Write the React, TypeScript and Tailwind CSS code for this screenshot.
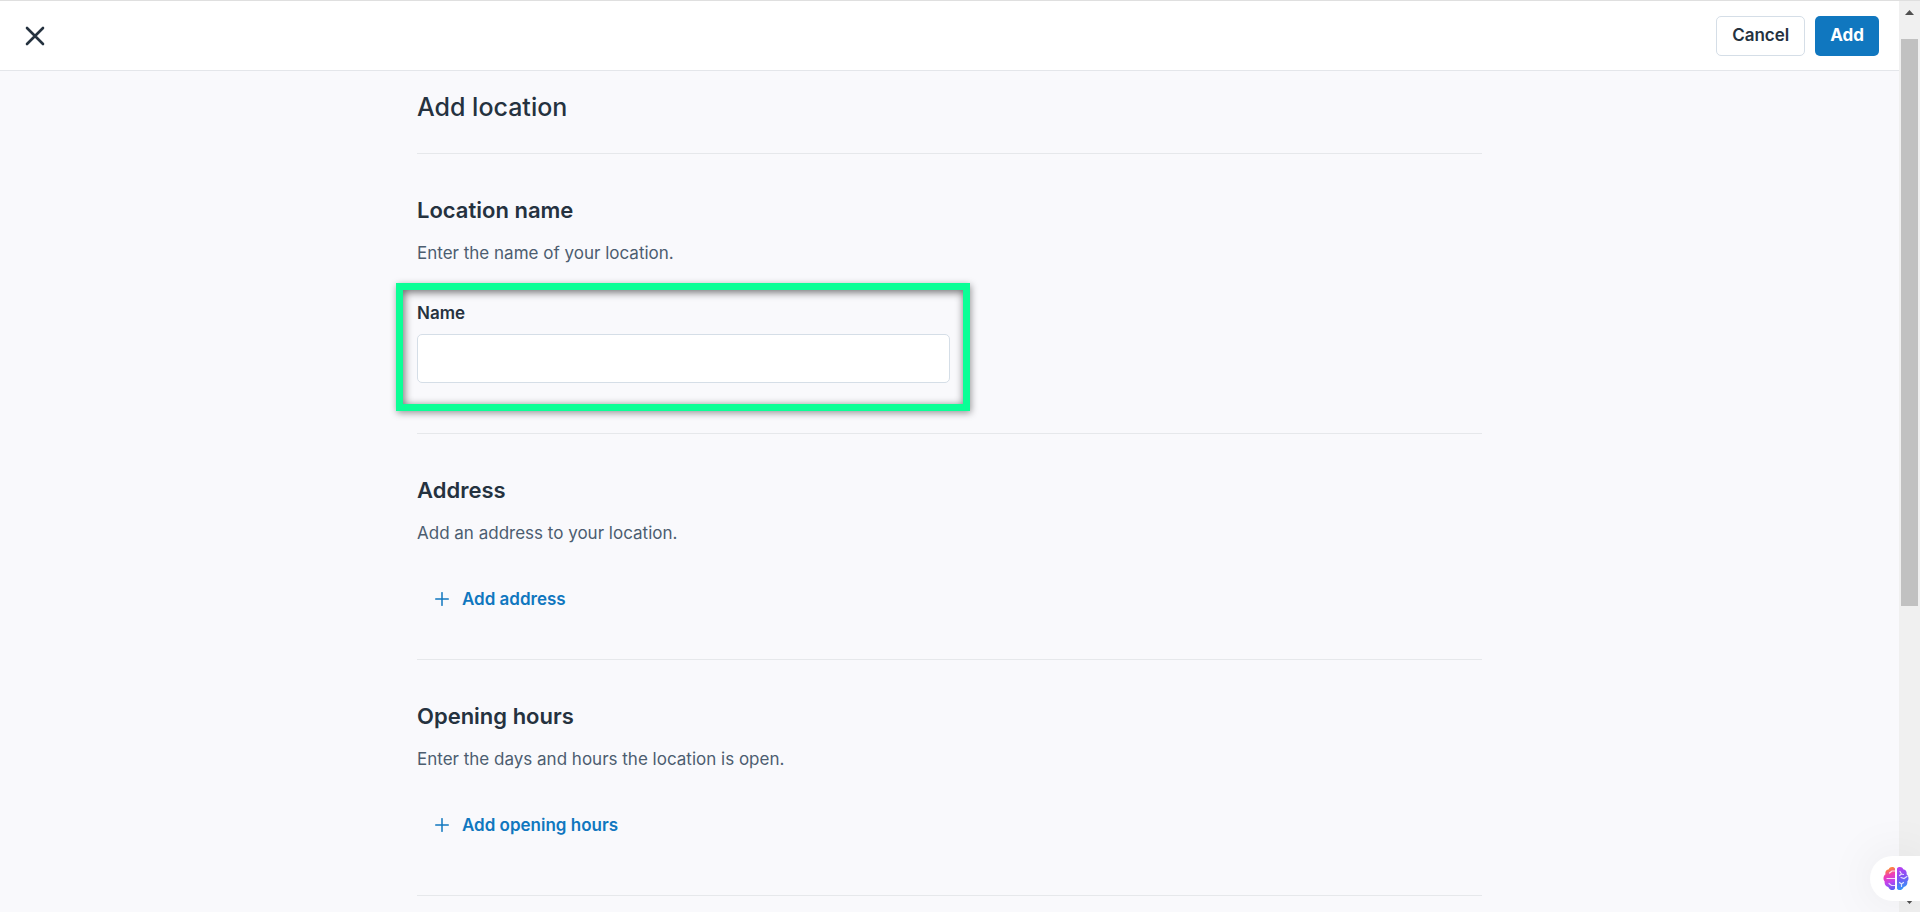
import React, { useState } from 'react';

interface SectionProps {
  title: string;
  description: string;
  className: string;
  children: React.ReactNode;
}

function Section({ title, description, className, children }: SectionProps) {
  return (
    <section className={`border-b border-[#e6e8eb] pt-[42px] ${className}`}>
      <h2 className="text-[22px] leading-7 font-semibold">{title}</h2>
      <p className="mt-[15px] text-[17px] leading-7 text-[#4c5d70]">{description}</p>
      {children}
    </section>
  );
}

function AddLink({ label }: { label: string }) {
  return (
    <button type="button" className="mt-7 flex h-12 items-center gap-[13px] px-[18px] text-[#1077bf]">
      <svg width="14" height="14" viewBox="0 0 14 14" fill="none" stroke="currentColor" strokeWidth="1.5" strokeLinecap="round">
        <path d="M7 .7v12.6M.7 7h12.6" />
      </svg>
      <span className="text-[17px] leading-6 font-semibold">{label}</span>
    </button>
  );
}

function BrainIcon() {
  return (
    <svg width="26" height="25" viewBox="0 0 26 25" fill="none">
      <defs>
        <linearGradient id="left" x1="3" y1="2" x2="11" y2="23" gradientUnits="userSpaceOnUse">
          <stop stopColor="#ff9a1e" />
          <stop offset=".35" stopColor="#f03cb4" />
          <stop offset=".65" stopColor="#c044ee" />
          <stop offset="1" stopColor="#5a5cf5" />
        </linearGradient>
        <linearGradient id="right" x1="15" y1="1" x2="22" y2="23" gradientUnits="userSpaceOnUse">
          <stop stopColor="#c03df0" />
          <stop offset=".5" stopColor="#7a55f5" />
          <stop offset="1" stopColor="#2f9af8" />
        </linearGradient>
      </defs>
      <path d="M12 2.5C10.5 .2 6.5 .6 5.8 3.2 3.2 3.4 1.8 6 2.5 8.2 .2 9.8 -.2 13.5 1.7 15.5 1.2 18.5 3 20.6 5.3 21 6.4 24.6 10.8 25 12 22.5Z" fill="url(#left)" />
      <path d="M14 2.5C15.5 .2 19.5 .6 20.2 3.2 22.8 3.4 24.2 6 23.5 8.2 25.8 9.8 26.2 13.5 24.3 15.5 24.8 18.5 23 20.6 20.7 21 19.6 24.6 15.2 25 14 22.5Z" fill="url(#right)" />
      <g stroke="#fff" strokeOpacity=".8" strokeWidth="1.2" strokeLinecap="round">
        <path d="M12 5H9L6.5 7M12 12.5H4M12 19.5H8.5L6 17.5" />
        <path d="M17 5.5 18.5 8 16.5 9.5M18.5 8 20.5 8.5M18 11.5 21 12.5 24 10.5M16.5 16.5 18.5 18V20.5M18.5 18 20.5 16.5" />
      </g>
    </svg>
  );
}

export default function App() {
  const [name, setName] = useState('');

  return (
    <div className="relative flex h-screen flex-col overflow-hidden border-t border-[#dfdfdf] bg-[#f9f9fc] font-['Inter','Liberation_Sans',sans-serif] text-[#25323f]">
      <div className="flex min-h-0 flex-1">
        <div className="flex min-w-0 flex-1 flex-col">
          <header className="flex h-[70px] shrink-0 items-center justify-between border-b border-[#e4e6ea] bg-white pr-5 pl-[25px]">
            <button type="button" aria-label="Close">
              <svg width="20" height="20" viewBox="0 0 20 20" fill="none" stroke="currentColor" strokeWidth="2.6" strokeLinecap="round">
                <path d="M2 2l16 16M18 2L2 18" />
              </svg>
            </button>
            <div className="flex gap-2.5">
              <button type="button" className="h-10 rounded-[5px] border border-[#d5dee7] bg-white px-[15px] pb-0.5 text-[17px] leading-6 font-semibold">
                Cancel
              </button>
              <button type="button" className="h-10 rounded-[5px] bg-[#1077bf] px-[15px] pb-0.5 text-[17px] leading-6 font-bold text-white">
                Add
              </button>
            </div>
          </header>

          <main className="mx-auto min-h-0 w-full max-w-[1065px] flex-1">
            <h1 className="border-b border-[#e6e8eb] pt-5 pb-[30px] text-[25px] leading-8 font-medium">Add location</h1>

            <Section title="Location name" description="Enter the name of your location." className="pb-[50px]">
              <div className="relative mt-[34px] w-1/2">
                <label htmlFor="location-name" className="block text-[17px] leading-6 font-semibold">
                  Name
                </label>
                <input
                  id="location-name"
                  type="text"
                  value={name}
                  onChange={(e) => setName(e.target.value)}
                  className="mt-[9px] block h-[49px] w-full rounded-[5px] border border-[#d5dee7] bg-white px-4 text-[17px] outline-none"
                />
                {/* Highlight frame around the field */}
                <div className="pointer-events-none absolute -top-[18px] -right-5 -bottom-7 -left-[21px] border-7 border-[#0aff96] shadow-[1px_2px_7px_rgba(0,0,0,0.4),inset_1px_2px_8px_rgba(0,0,0,0.6)]" />
              </div>
            </Section>

            <Section title="Address" description="Add an address to your location." className="pb-9">
              <AddLink label="Add address" />
            </Section>

            <Section title="Opening hours" description="Enter the days and hours the location is open." className="pb-[46px]">
              <AddLink label="Add opening hours" />
            </Section>
          </main>
        </div>

        {/* Scrollbar */}
        <div className="flex w-[21px] shrink-0 flex-col items-center bg-[#f0f0f0]">
          <svg className="my-[9px] shrink-0" width="9" height="5" viewBox="0 0 9 5" fill="#505050">
            <path d="M0 5 4.5 0 9 5Z" />
          </svg>
          <div className="mt-[15px] h-[567px] w-[17px] bg-[#c1c1c1]" />
          <svg className="mt-auto mb-2 shrink-0" width="9" height="5" viewBox="0 0 9 5" fill="#505050">
            <path d="M0 0 4.5 5 9 0Z" />
          </svg>
        </div>
      </div>

      <button
        type="button"
        aria-label="Assistant"
        className="absolute right-0 bottom-[11px] flex h-[45px] w-[50px] items-center rounded-l-full bg-white pl-[13px] shadow-[0_0_50px_rgba(0,0,0,0.08)]"
      >
        <BrainIcon />
      </button>
    </div>
  );
}
